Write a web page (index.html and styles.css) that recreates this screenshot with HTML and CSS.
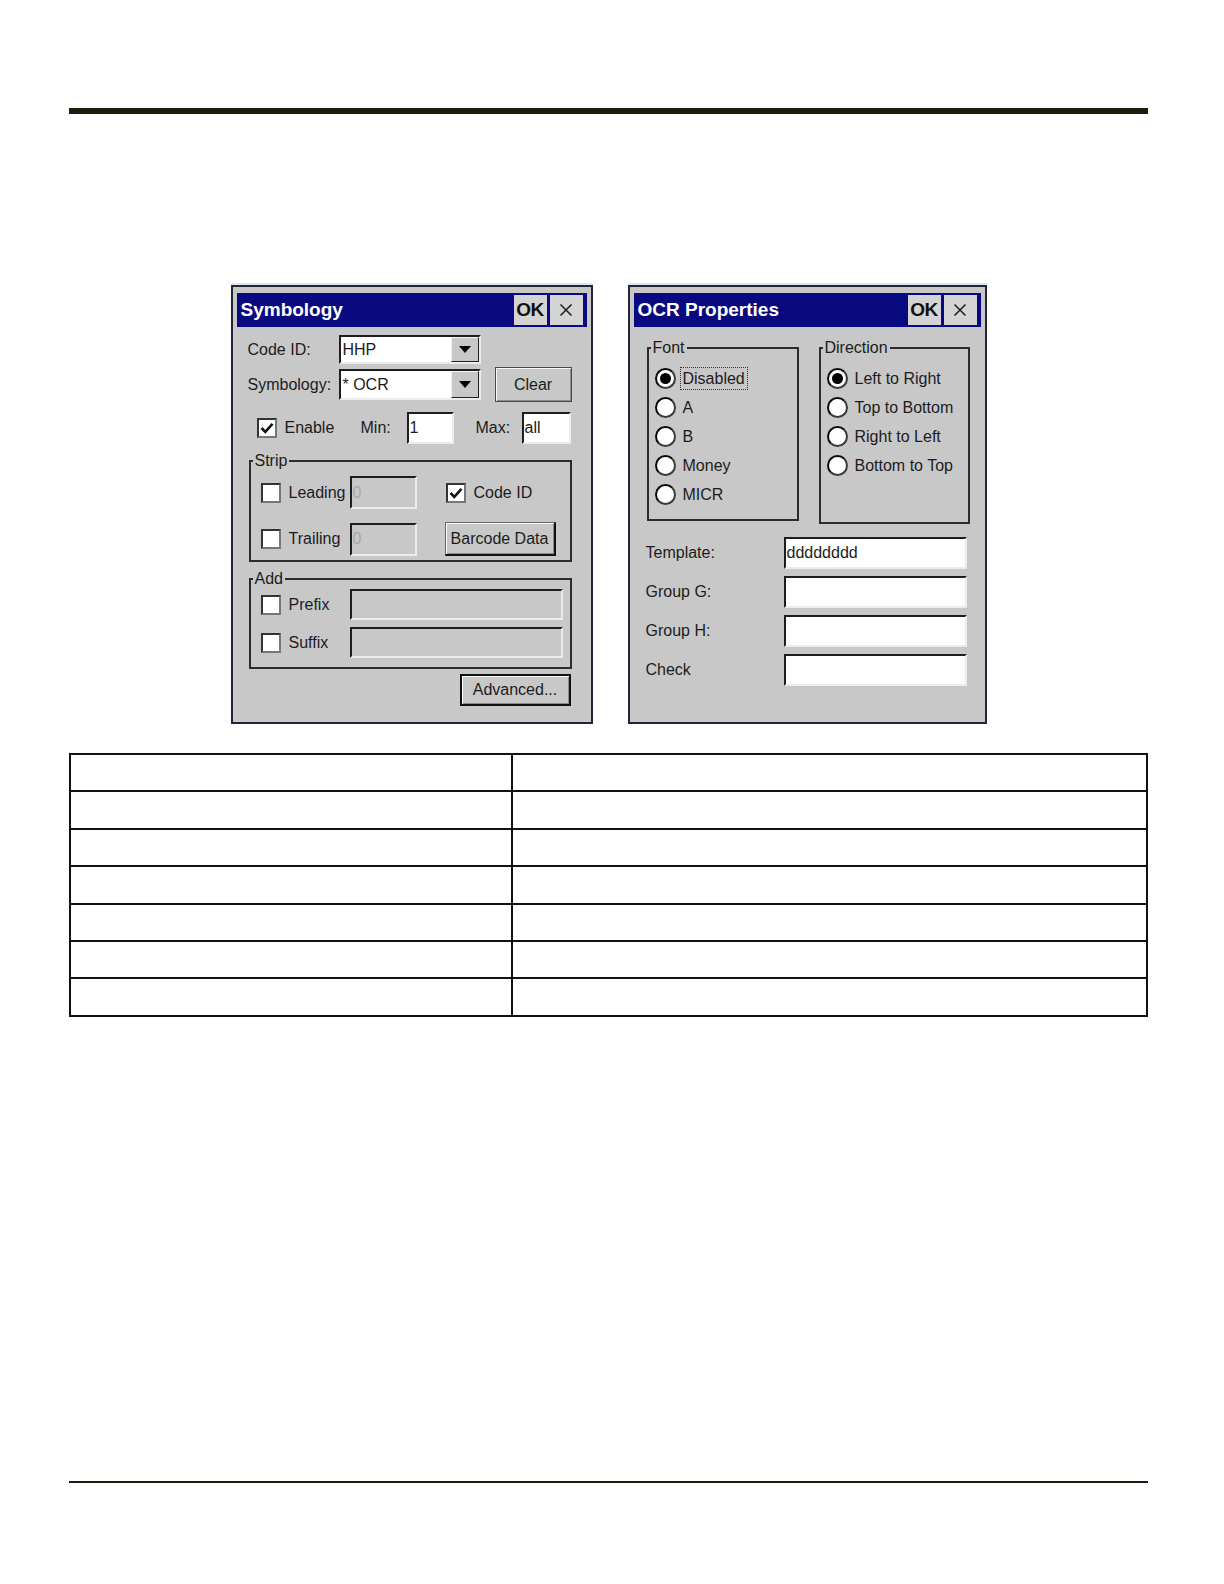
FILE: index.html
```html
<!DOCTYPE html>
<html>
<head>
<meta charset="utf-8">
<title>Symbology / OCR Properties</title>
<link rel="stylesheet" href="styles.css">
</head>
<body>
<div class="page">
  <div class="rule-top"></div>

  <div class="shots">
    <!-- Symbology dialog -->
    <div class="dialog dialog-sym">
      <div class="titlebar">
        <span class="title">Symbology</span>
        <span class="tb-btn tb-ok">OK</span>
        <span class="tb-btn tb-x"><svg width="16" height="16" viewBox="0 0 16 16"><path d="M2.5 2.5 L13.5 13.5 M13.5 2.5 L2.5 13.5" stroke="#222" stroke-width="1.6" fill="none"/></svg></span>
      </div>

      <div class="sym-row1">
        <span class="lbl-code">Code ID:</span>
        <div class="combo"><span class="combo-text">HHP</span><span class="combo-btn"><span class="tri"></span></span></div>
      </div>

      <div class="sym-row2">
        <span class="lbl-code">Symbology:</span>
        <div class="combo combo-tall"><span class="combo-text">* OCR</span><span class="combo-btn"><span class="tri"></span></span></div>
        <span class="btn btn-clear">Clear</span>
      </div>

      <div class="sym-row3">
        <span class="cb on"><svg width="16" height="16" viewBox="0 0 16 16"><path d="M2.5 8 L6.3 11.8 L13.5 3.8" stroke="#111" stroke-width="2.6" fill="none"/></svg></span>
        <span class="cb-label w-enable">Enable</span>
        <span class="w-min">Min:</span>
        <span class="field w-minf">1</span>
        <span class="w-max">Max:</span>
        <span class="field w-maxf">all</span>
      </div>

      <div class="group group-strip">
        <span class="legend">Strip</span>
        <div class="grow grow-a">
          <span class="cb"></span>
          <span class="cb-label w-strip">Leading</span>
          <span class="field field-off w-small">0</span>
          <span class="cb cb-codeid on"><svg width="16" height="16" viewBox="0 0 16 16"><path d="M2.5 8 L6.3 11.8 L13.5 3.8" stroke="#111" stroke-width="2.6" fill="none"/></svg></span>
          <span class="cb-label">Code ID</span>
        </div>
        <div class="grow grow-b">
          <span class="cb"></span>
          <span class="cb-label w-strip">Trailing</span>
          <span class="field field-off w-small">0</span>
          <span class="btn btn-barcode">Barcode Data</span>
        </div>
      </div>

      <div class="group group-add">
        <span class="legend">Add</span>
        <div class="grow grow-c">
          <span class="cb"></span>
          <span class="cb-label w-strip">Prefix</span>
          <span class="field field-off w-long"></span>
        </div>
        <div class="grow grow-c grow-gap">
          <span class="cb"></span>
          <span class="cb-label w-strip">Suffix</span>
          <span class="field field-off w-long"></span>
        </div>
      </div>

      <div class="adv-row">
        <span class="btn btn-adv">Advanced...</span>
      </div>
    </div>

    <!-- OCR Properties dialog -->
    <div class="dialog dialog-ocr">
      <div class="titlebar">
        <span class="title">OCR Properties</span>
        <span class="tb-btn tb-ok">OK</span>
        <span class="tb-btn tb-x"><svg width="16" height="16" viewBox="0 0 16 16"><path d="M2.5 2.5 L13.5 13.5 M13.5 2.5 L2.5 13.5" stroke="#222" stroke-width="1.6" fill="none"/></svg></span>
      </div>

      <div class="ocr-groups">
        <div class="group group-font">
          <span class="legend">Font</span>
          <div class="radio-row"><span class="radio on"></span><span class="radio-label focus">Disabled</span></div>
          <div class="radio-row"><span class="radio"></span><span class="radio-label">A</span></div>
          <div class="radio-row"><span class="radio"></span><span class="radio-label">B</span></div>
          <div class="radio-row"><span class="radio"></span><span class="radio-label">Money</span></div>
          <div class="radio-row"><span class="radio"></span><span class="radio-label">MICR</span></div>
        </div>
        <div class="group group-dir">
          <span class="legend">Direction</span>
          <div class="radio-row"><span class="radio on"></span><span class="radio-label">Left to Right</span></div>
          <div class="radio-row"><span class="radio"></span><span class="radio-label">Top to Bottom</span></div>
          <div class="radio-row"><span class="radio"></span><span class="radio-label">Right to Left</span></div>
          <div class="radio-row"><span class="radio"></span><span class="radio-label">Bottom to Top</span></div>
        </div>
      </div>

      <div class="ocr-form">
        <div class="form-row"><span class="form-lbl">Template:</span><span class="field w-wide">dddddddd</span></div>
        <div class="form-row"><span class="form-lbl">Group G:</span><span class="field w-wide"></span></div>
        <div class="form-row"><span class="form-lbl">Group H:</span><span class="field w-wide"></span></div>
        <div class="form-row"><span class="form-lbl">Check</span><span class="field w-wide"></span></div>
      </div>
    </div>
  </div>

  <table class="grid">
    <tr><td class="c1"></td><td></td></tr>
    <tr><td class="c1"></td><td></td></tr>
    <tr><td class="c1"></td><td></td></tr>
    <tr><td class="c1"></td><td></td></tr>
    <tr><td class="c1"></td><td></td></tr>
    <tr><td class="c1"></td><td></td></tr>
    <tr><td class="c1"></td><td></td></tr>
  </table>

  <div class="rule-bottom"></div>
</div>
</body>
</html>
```

FILE: styles.css
```css
* { box-sizing: border-box; }

body {
  margin: 0;
  background: #ffffff;
  font-family: "Liberation Sans", Arial, sans-serif;
}

.page {
  margin-left: 69px;
  width: 1079px;
  padding-top: 108px;
}

.rule-top {
  height: 6px;
  background: #1d1d0b;
}

.shots {
  display: flex;
  justify-content: center;
  gap: 35px;
  margin-top: 171px;
}

/* ---------- dialog frame ---------- */
.dialog {
  height: 439px;
  background: #c8c8c8;
  border: 2px solid #23233a;
  padding: 6px 4px 4px;
  box-shadow: 0 -2px 0 #d8eaea;
  font-size: 16px;
  color: #1c1c1c;
}
.dialog-sym { width: 362px; }
.dialog-ocr { width: 359px; }

.titlebar {
  height: 34px;
  background: #0a0a80;
  display: flex;
  align-items: center;
  gap: 3px;
  padding: 0 4px;
}
.title {
  flex: 1;
  color: #ffffff;
  font-weight: bold;
  font-size: 19px;
}
.tb-btn {
  width: 33px;
  height: 30px;
  background: #d4d4d4;
  display: flex;
  align-items: center;
  justify-content: center;
}
.tb-ok {
  font-weight: bold;
  font-size: 19px;
  color: #111;
  letter-spacing: -0.5px;
}

/* ---------- common controls ---------- */
.combo {
  width: 142px;
  height: 29px;
  display: flex;
  background: #ffffff;
  border: 2px solid;
  border-color: #1e1e1e #ececec #ececec #1e1e1e;
}
.combo-tall { height: 31px; }
.combo-text {
  flex: 1;
  padding-left: 2px;
  align-self: center;
}
.combo-btn {
  width: 28px;
  background: #c8c8c8;
  border: 1px solid;
  border-color: #f2f2f2 #222 #222 #f2f2f2;
  display: flex;
  align-items: center;
  justify-content: center;
}
.tri {
  width: 0;
  height: 0;
  border-left: 6px solid transparent;
  border-right: 6px solid transparent;
  border-top: 7px solid #000;
}

.field {
  height: 32px;
  display: flex;
  align-items: center;
  padding-left: 1px;
  background: #ffffff;
  border: 2px solid;
  border-color: #1e1e1e #ececec #ececec #1e1e1e;
}
.field-off {
  background: #c8c8c8;
  color: #a8a8a8;
  height: 33px;
}

.btn {
  display: flex;
  align-items: center;
  justify-content: center;
  background: #c8c8c8;
  border: 1px solid #4a4a4a;
  box-shadow: inset 1px 1px 0 #fafafa, inset -1px -1px 0 #8c8c8c;
}

.cb {
  width: 20px;
  height: 20px;
  flex: none;
  background: #ffffff;
  border: 2px solid;
  border-color: #333 #777 #777 #333;
  display: flex;
  align-items: center;
  justify-content: center;
}
.cb-label { margin-left: 8px; }

.group {
  position: relative;
  border: 2px solid #2c2c2c;
}
.legend {
  position: absolute;
  top: -10px;
  left: 2px;
  padding: 0 2px;
  line-height: 18px;
  background: #c8c8c8;
}

/* ---------- Symbology layout ---------- */
.sym-row1 {
  display: flex;
  align-items: center;
  margin-top: 8px;
  padding-left: 11px;
  height: 29px;
}
.sym-row2 {
  display: flex;
  align-items: center;
  margin-top: 3px;
  padding-left: 11px;
  height: 35px;
}
.lbl-code { width: 91px; }
.btn-clear {
  width: 77px;
  height: 35px;
  margin-left: 14px;
}

.sym-row3 {
  display: flex;
  align-items: center;
  height: 32px;
  margin-top: 10px;
  padding-left: 20px;
}
.w-enable { width: 76px; }
.w-min { width: 46px; }
.w-minf { width: 47px; }
.w-max { width: 46px; margin-left: 22px; }
.w-maxf { width: 49px; }

.group-strip {
  margin: 16px 0 0 12px;
  width: 323px;
  height: 102px;
  padding: 14px 0 4px 10px;
}
.grow {
  display: flex;
  align-items: center;
}
.grow-a { height: 33px; }
.grow-b { height: 34px; margin-top: 13px; }
.w-strip { width: 61px; }
.w-small { width: 67px; }
.cb-codeid { margin-left: 29px; }
.btn-barcode {
  width: 111px;
  height: 34px;
  margin-left: 28px;
  border-color: #666 #111 #111 #666;
  border-width: 1px 2px 2px 1px;
}

.group-add {
  margin: 16px 0 0 12px;
  width: 323px;
  height: 91px;
  padding: 9px 0 9px 10px;
}
.grow-c { height: 31px; }
.grow-gap { margin-top: 7px; }
.w-long { width: 213px; height: 31px; }

.adv-row {
  display: flex;
  justify-content: flex-end;
  margin: 5px 0 0 12px;
  width: 323px;
  padding-right: 1px;
}
.btn-adv {
  width: 111px;
  height: 32px;
  border: 2px solid #111;
}

/* ---------- OCR layout ---------- */
.ocr-groups {
  display: flex;
  align-items: flex-start;
  gap: 20px;
  margin-top: 20px;
  padding-left: 13px;
}
.group-font {
  width: 152px;
  height: 174px;
  padding: 15px 0 0 6px;
}
.group-dir {
  width: 151px;
  height: 177px;
  padding: 15px 0 0 6px;
}
.radio-row {
  display: flex;
  align-items: center;
  height: 29px;
}
.radio {
  width: 21px;
  height: 21px;
  flex: none;
  border-radius: 50%;
  background: #ffffff;
  border: 2px solid;
  border-color: #0a0a0a #3a3a3a #3a3a3a #0a0a0a;
  display: flex;
  align-items: center;
  justify-content: center;
}
.radio.on::after {
  content: "";
  width: 11px;
  height: 11px;
  border-radius: 50%;
  background: #000;
}
.radio-label {
  margin-left: 4px;
  padding: 1px 2px;
  line-height: 19px;
  border: 1px dotted transparent;
}
.radio-label.focus { border-color: #333; }

.ocr-form {
  display: flex;
  flex-direction: column;
  gap: 7px;
  margin-top: 13px;
  padding-left: 12px;
}
.form-row {
  display: flex;
  align-items: center;
  height: 32px;
}
.form-lbl { width: 138px; }
.w-wide { width: 183px; }

/* ---------- table and footer rule ---------- */
.grid {
  margin-top: 29px;
  width: 1079px;
  border-collapse: collapse;
}
.grid tr { height: 37.4px; }
.grid td {
  border: 2px solid #111;
  padding: 0;
}
.grid td.c1 { width: 442px; }

.rule-bottom {
  margin-top: 464px;
  height: 2px;
  background: #1d1d0b;
}
```
